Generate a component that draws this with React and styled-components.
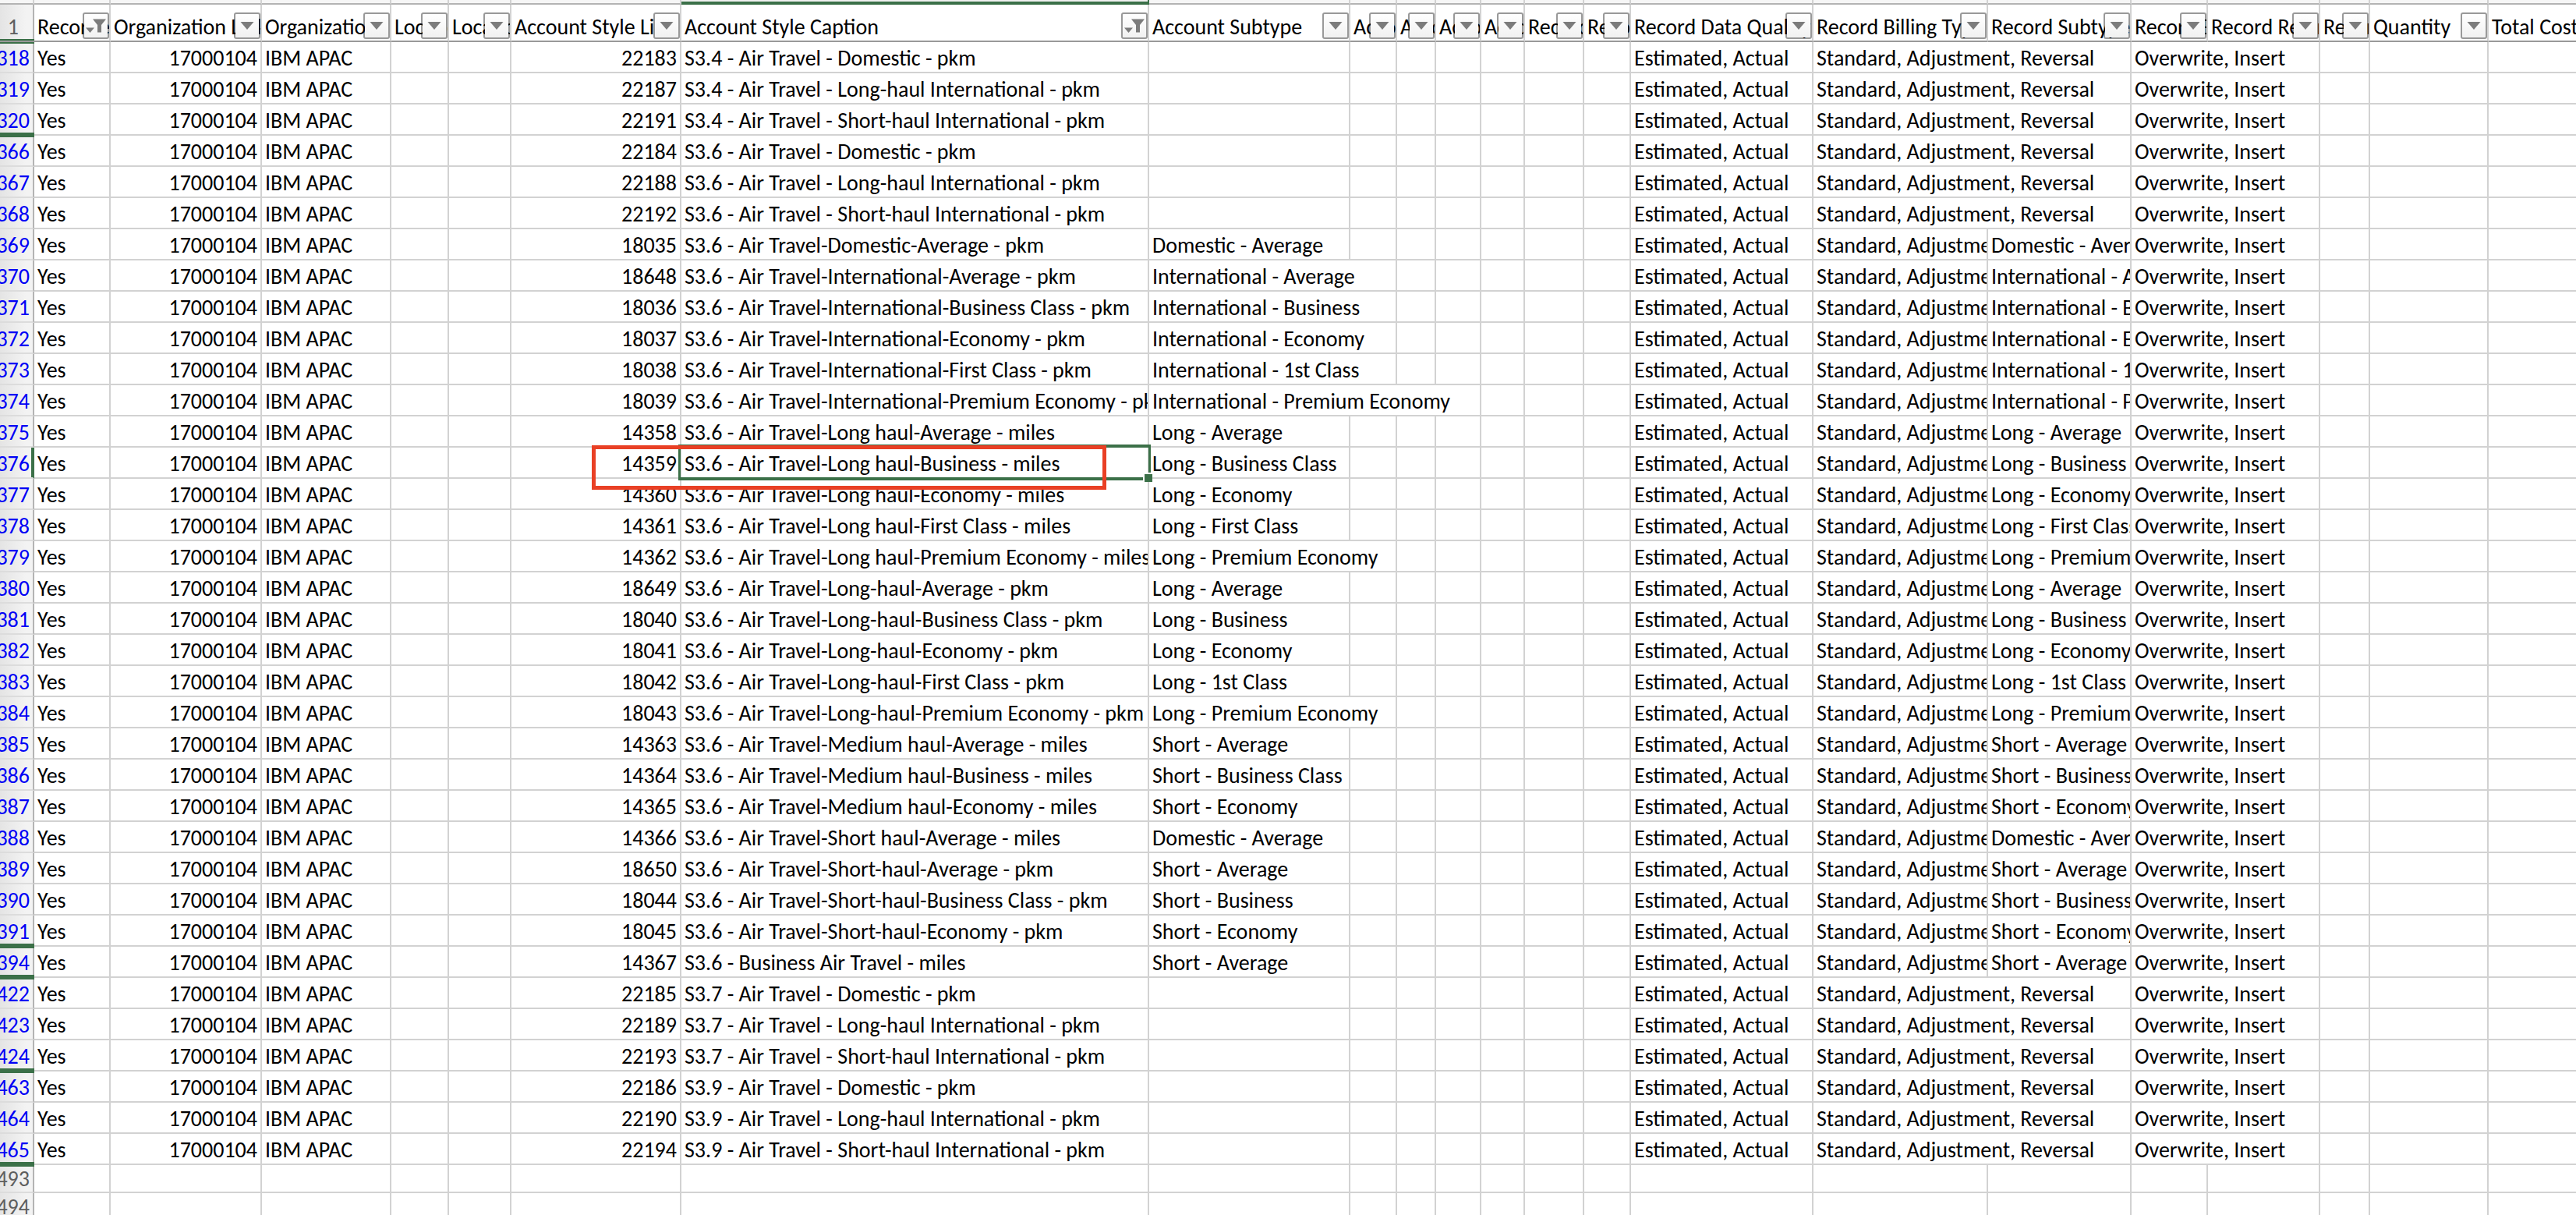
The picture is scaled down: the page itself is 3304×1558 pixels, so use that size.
import React from "react";
import styled, { createGlobalStyle, css } from "styled-components";

const Global = createGlobalStyle`
  *, *::before, *::after { box-sizing: border-box; }
  body { margin: 0; background: #fff; overflow: hidden; }
`;

const line = "#d2d2d2";
const green = "#3b7048";
const rule = "#b4b4b4";

const Viewport = styled.main`
  width: 100%;
  height: 100vh;
  overflow: hidden;
  font-family: Carlito, Lato, "Liberation Sans", sans-serif;
  font-size: 28px;
  line-height: 32px;
  color: #000;
`;

const Sheet = styled.table`
  width: 100%;
  table-layout: fixed;
  border-collapse: separate;
  border-spacing: 0;

  tr > :last-child {
    border-right: 0;
  }
`;

const Col = styled.col`
  width: ${(p) => (p.$w ? `${p.$w}px` : "auto")};
`;

const StripCell = styled.td`
  height: 6px;
  padding: 0;
  background: #f6f6f6;
  border-right: 2px solid ${line};
  border-bottom: 2px solid ${rule};
  ${(p) => p.$active && css`
    background: linear-gradient(#f0f0f0 2px, ${green} 2px);
    border-color: ${green};
  `}
`;

const RowHead = styled.th`
  position: relative;
  padding: 0;
  font-weight: 400;
  color: ${(p) => (p.$filtered ? "#0000f5" : "#5e5e5e")};
  background: linear-gradient(90deg, #e4e4e4, #f3f3f3 80%);
  border-right: 2px solid ${(p) => (p.$active ? green : rule)};
  border-bottom: 2px solid ${(p) => (p.$top ? "#999" : "#dcdcdc")};
  ${(p) => p.$active && css`box-shadow: inset -2px 0 ${green};`}
`;

const Num = styled.span`
  display: flex;
  justify-content: flex-end;
  padding: ${(p) => (p.$top ? "13px 18px 1px 0" : p.$short ? "2px 4px 0 0" : "5px 4px 1px 0")};
`;

const HiddenMark = styled.span`
  position: absolute;
  z-index: 1;
  left: 0;
  right: -2px;
  bottom: -4px;
  height: 6px;
  background: ${green};
  ${(p) => p.$split && css`
    background: linear-gradient(${green} 2px, #999 2px, #999 4px, ${green} 4px);
  `}
`;

const HeadCell = styled.th`
  position: relative;
  height: 48px;
  padding: 0;
  font-weight: 400;
  text-align: left;
  border-right: 2px solid ${line};
  border-bottom: 2px solid #999;
`;

const Label = styled.span`
  display: block;
  overflow: hidden;
  white-space: nowrap;
  padding: 13px 0 1px 4px;
`;

const FilterButton = styled.button`
  position: absolute;
  right: 0;
  bottom: 2px;
  display: flex;
  align-items: center;
  justify-content: center;
  width: 34px;
  height: 34px;
  padding: 0;
  border: 2px solid rgba(0, 0, 0, 0.4);
  border-radius: 3px;
  background: linear-gradient(#fff, #f1f1f1) padding-box;
`;

const Cell = styled.td`
  position: relative;
  height: ${(p) => (p.$short ? 36 : 40)}px;
  padding: 0;
  text-align: ${(p) => (p.$right ? "right" : "left")};
  border-right: 2px solid ${line};
  border-bottom: 2px solid ${line};
`;

const Text = styled.span`
  display: block;
  overflow: hidden;
  white-space: nowrap;
  padding: 5px 4px 1px;
`;

const Selection = styled.span`
  position: absolute;
  z-index: 2;
  inset: -4px;
  border: 4px solid ${green};
  border-left-width: 3px;
  border-right-width: 3px;
  pointer-events: none;

  &::after {
    content: "";
    position: absolute;
    right: -5px;
    bottom: -6px;
    width: 12px;
    height: 12px;
    background: ${green};
    border: solid #fff;
    border-width: 2px 0 0 2px;
  }
`;

const RedBox = styled.span`
  position: absolute;
  z-index: 3;
  top: -3px;
  left: -115px;
  width: 660px;
  height: 57px;
  border: 5px solid #e94025;
  pointer-events: none;
`;

const columns = [
  { w: 98, label: "Recorder", funnel: true },
  { w: 194, label: "Organization Link" },
  { w: 166, label: "Organization" },
  { w: 74, label: "Location" },
  { w: 80, label: "Location" },
  { w: 218, label: "Account Style Link" },
  { w: 600, label: "Account Style Caption", funnel: true, active: true },
  { w: 258, label: "Account Subtype" },
  { w: 60, label: "Account" },
  { w: 50, label: "Account" },
  { w: 58, label: "Account" },
  { w: 56, label: "Account" },
  { w: 76, label: "Record" },
  { w: 60, label: "Record" },
  { w: 234, label: "Record Data Quality" },
  { w: 224, label: "Record Billing Type" },
  { w: 184, label: "Record Subtype" },
  { w: 98, label: "Record Entry" },
  { w: 144, label: "Record Reference" },
  { w: 64, label: "Record" },
  { w: 152, label: "Quantity" },
  { w: 0, label: "Total Cost", plain: true },
];

// [row, style link, caption, subtype, columns the subtype runs across]
const rows = [
  [318, 22183, "S3.4 - Air Travel - Domestic - pkm"],
  [319, 22187, "S3.4 - Air Travel - Long-haul International - pkm"],
  [320, 22191, "S3.4 - Air Travel - Short-haul International - pkm"],
  [366, 22184, "S3.6 - Air Travel - Domestic - pkm"],
  [367, 22188, "S3.6 - Air Travel - Long-haul International - pkm"],
  [368, 22192, "S3.6 - Air Travel - Short-haul International - pkm"],
  [369, 18035, "S3.6 - Air Travel-Domestic-Average - pkm", "Domestic - Average"],
  [370, 18648, "S3.6 - Air Travel-International-Average - pkm", "International - Average", 2],
  [371, 18036, "S3.6 - Air Travel-International-Business Class - pkm", "International - Business", 2],
  [372, 18037, "S3.6 - Air Travel-International-Economy - pkm", "International - Economy", 2],
  [373, 18038, "S3.6 - Air Travel-International-First Class - pkm", "International - 1st Class", 2],
  [374, 18039, "S3.6 - Air Travel-International-Premium Economy - pkm", "International - Premium Economy", 4],
  [375, 14358, "S3.6 - Air Travel-Long haul-Average - miles", "Long - Average"],
  [376, 14359, "S3.6 - Air Travel-Long haul-Business - miles", "Long - Business Class"],
  [377, 14360, "S3.6 - Air Travel-Long haul-Economy - miles", "Long - Economy"],
  [378, 14361, "S3.6 - Air Travel-Long haul-First Class - miles", "Long - First Class"],
  [379, 14362, "S3.6 - Air Travel-Long haul-Premium Economy - miles", "Long - Premium Economy", 2],
  [380, 18649, "S3.6 - Air Travel-Long-haul-Average - pkm", "Long - Average"],
  [381, 18040, "S3.6 - Air Travel-Long-haul-Business Class - pkm", "Long - Business"],
  [382, 18041, "S3.6 - Air Travel-Long-haul-Economy - pkm", "Long - Economy"],
  [383, 18042, "S3.6 - Air Travel-Long-haul-First Class - pkm", "Long - 1st Class"],
  [384, 18043, "S3.6 - Air Travel-Long-haul-Premium Economy - pkm", "Long - Premium Economy", 2],
  [385, 14363, "S3.6 - Air Travel-Medium haul-Average - miles", "Short - Average"],
  [386, 14364, "S3.6 - Air Travel-Medium haul-Business - miles", "Short - Business Class"],
  [387, 14365, "S3.6 - Air Travel-Medium haul-Economy - miles", "Short - Economy"],
  [388, 14366, "S3.6 - Air Travel-Short haul-Average - miles", "Domestic - Average"],
  [389, 18650, "S3.6 - Air Travel-Short-haul-Average - pkm", "Short - Average"],
  [390, 18044, "S3.6 - Air Travel-Short-haul-Business Class - pkm", "Short - Business"],
  [391, 18045, "S3.6 - Air Travel-Short-haul-Economy - pkm", "Short - Economy"],
  [394, 14367, "S3.6 - Business Air Travel - miles", "Short - Average"],
  [422, 22185, "S3.7 - Air Travel - Domestic - pkm"],
  [423, 22189, "S3.7 - Air Travel - Long-haul International - pkm"],
  [424, 22193, "S3.7 - Air Travel - Short-haul International - pkm"],
  [463, 22186, "S3.9 - Air Travel - Domestic - pkm"],
  [464, 22190, "S3.9 - Air Travel - Long-haul International - pkm"],
  [465, 22194, "S3.9 - Air Travel - Short-haul International - pkm"],
];

const hiddenAfter = new Set([320, 391, 394, 424, 465]);
const activeRow = 376;

const Arrow = () => (
  <svg width="18" height="10" viewBox="0 0 18 10" aria-hidden="true">
    <path d="M.5 0h17L9 10z" fill="#7c7c7c" />
  </svg>
);

const Funnel = () => (
  <svg width="26" height="18" viewBox="0 0 26 18" aria-hidden="true">
    <path d="M0 11.5h11L5.5 18z" fill="#7c7c7c" />
    <path d="M9 .5h17l-6 7.500v9.500h-5V8z" fill="#7c7c7c" />
  </svg>
);

const blanks = (n, short) =>
  Array.from({ length: n }, (_, i) => <Cell key={`b${i}`} $short={short} />);

function DataRow({ row }) {
  const [num, link, caption, subtype, span = 1] = row;
  const active = num === activeRow;
  return (
    <tr>
      <RowHead scope="row" $filtered $active={active}>
        <Num>{num}</Num>
        {hiddenAfter.has(num) && <HiddenMark />}
      </RowHead>
      <Cell><Text>Yes</Text></Cell>
      <Cell $right><Text>17000104</Text></Cell>
      <Cell><Text>IBM APAC</Text></Cell>
      {blanks(2)}
      <Cell $right><Text>{link}</Text></Cell>
      <Cell>
        <Text>{caption}</Text>
        {active && <Selection />}
        {active && <RedBox />}
      </Cell>
      <Cell colSpan={span}>{subtype && <Text>{subtype}</Text>}</Cell>
      {blanks(7 - span)}
      <Cell><Text>Estimated, Actual</Text></Cell>
      <Cell colSpan={subtype ? 1 : 2}><Text>Standard, Adjustment, Reversal</Text></Cell>
      {subtype && <Cell><Text>{subtype}</Text></Cell>}
      <Cell colSpan={2}><Text>Overwrite, Insert</Text></Cell>
      {blanks(3)}
    </tr>
  );
}

export default function App() {
  return (
    <Viewport>
      <Global />
      <Sheet>
        <colgroup>
          <Col $w={44} />
          {columns.map((c, i) => <Col key={i} $w={c.w} />)}
        </colgroup>
        <thead>
          <tr>
            <StripCell />
            {columns.map((c, i) => <StripCell key={i} $active={c.active} />)}
          </tr>
          <tr>
            <RowHead scope="row" $top>
              <Num $top>1</Num>
              <HiddenMark $split />
            </RowHead>
            {columns.map((c, i) => (
              <HeadCell key={i} scope="col">
                <Label>{c.label}</Label>
                {!c.plain && (
                  <FilterButton type="button" aria-label={`Filter ${c.label}`}>
                    {c.funnel ? <Funnel /> : <Arrow />}
                  </FilterButton>
                )}
              </HeadCell>
            ))}
          </tr>
        </thead>
        <tbody>
          {rows.map((r) => <DataRow key={r[0]} row={r} />)}
          {[493, 494].map((n) => (
            <tr key={n}>
              <RowHead scope="row"><Num $short>{n}</Num></RowHead>
              {blanks(22, true)}
            </tr>
          ))}
        </tbody>
      </Sheet>
    </Viewport>
  );
}
